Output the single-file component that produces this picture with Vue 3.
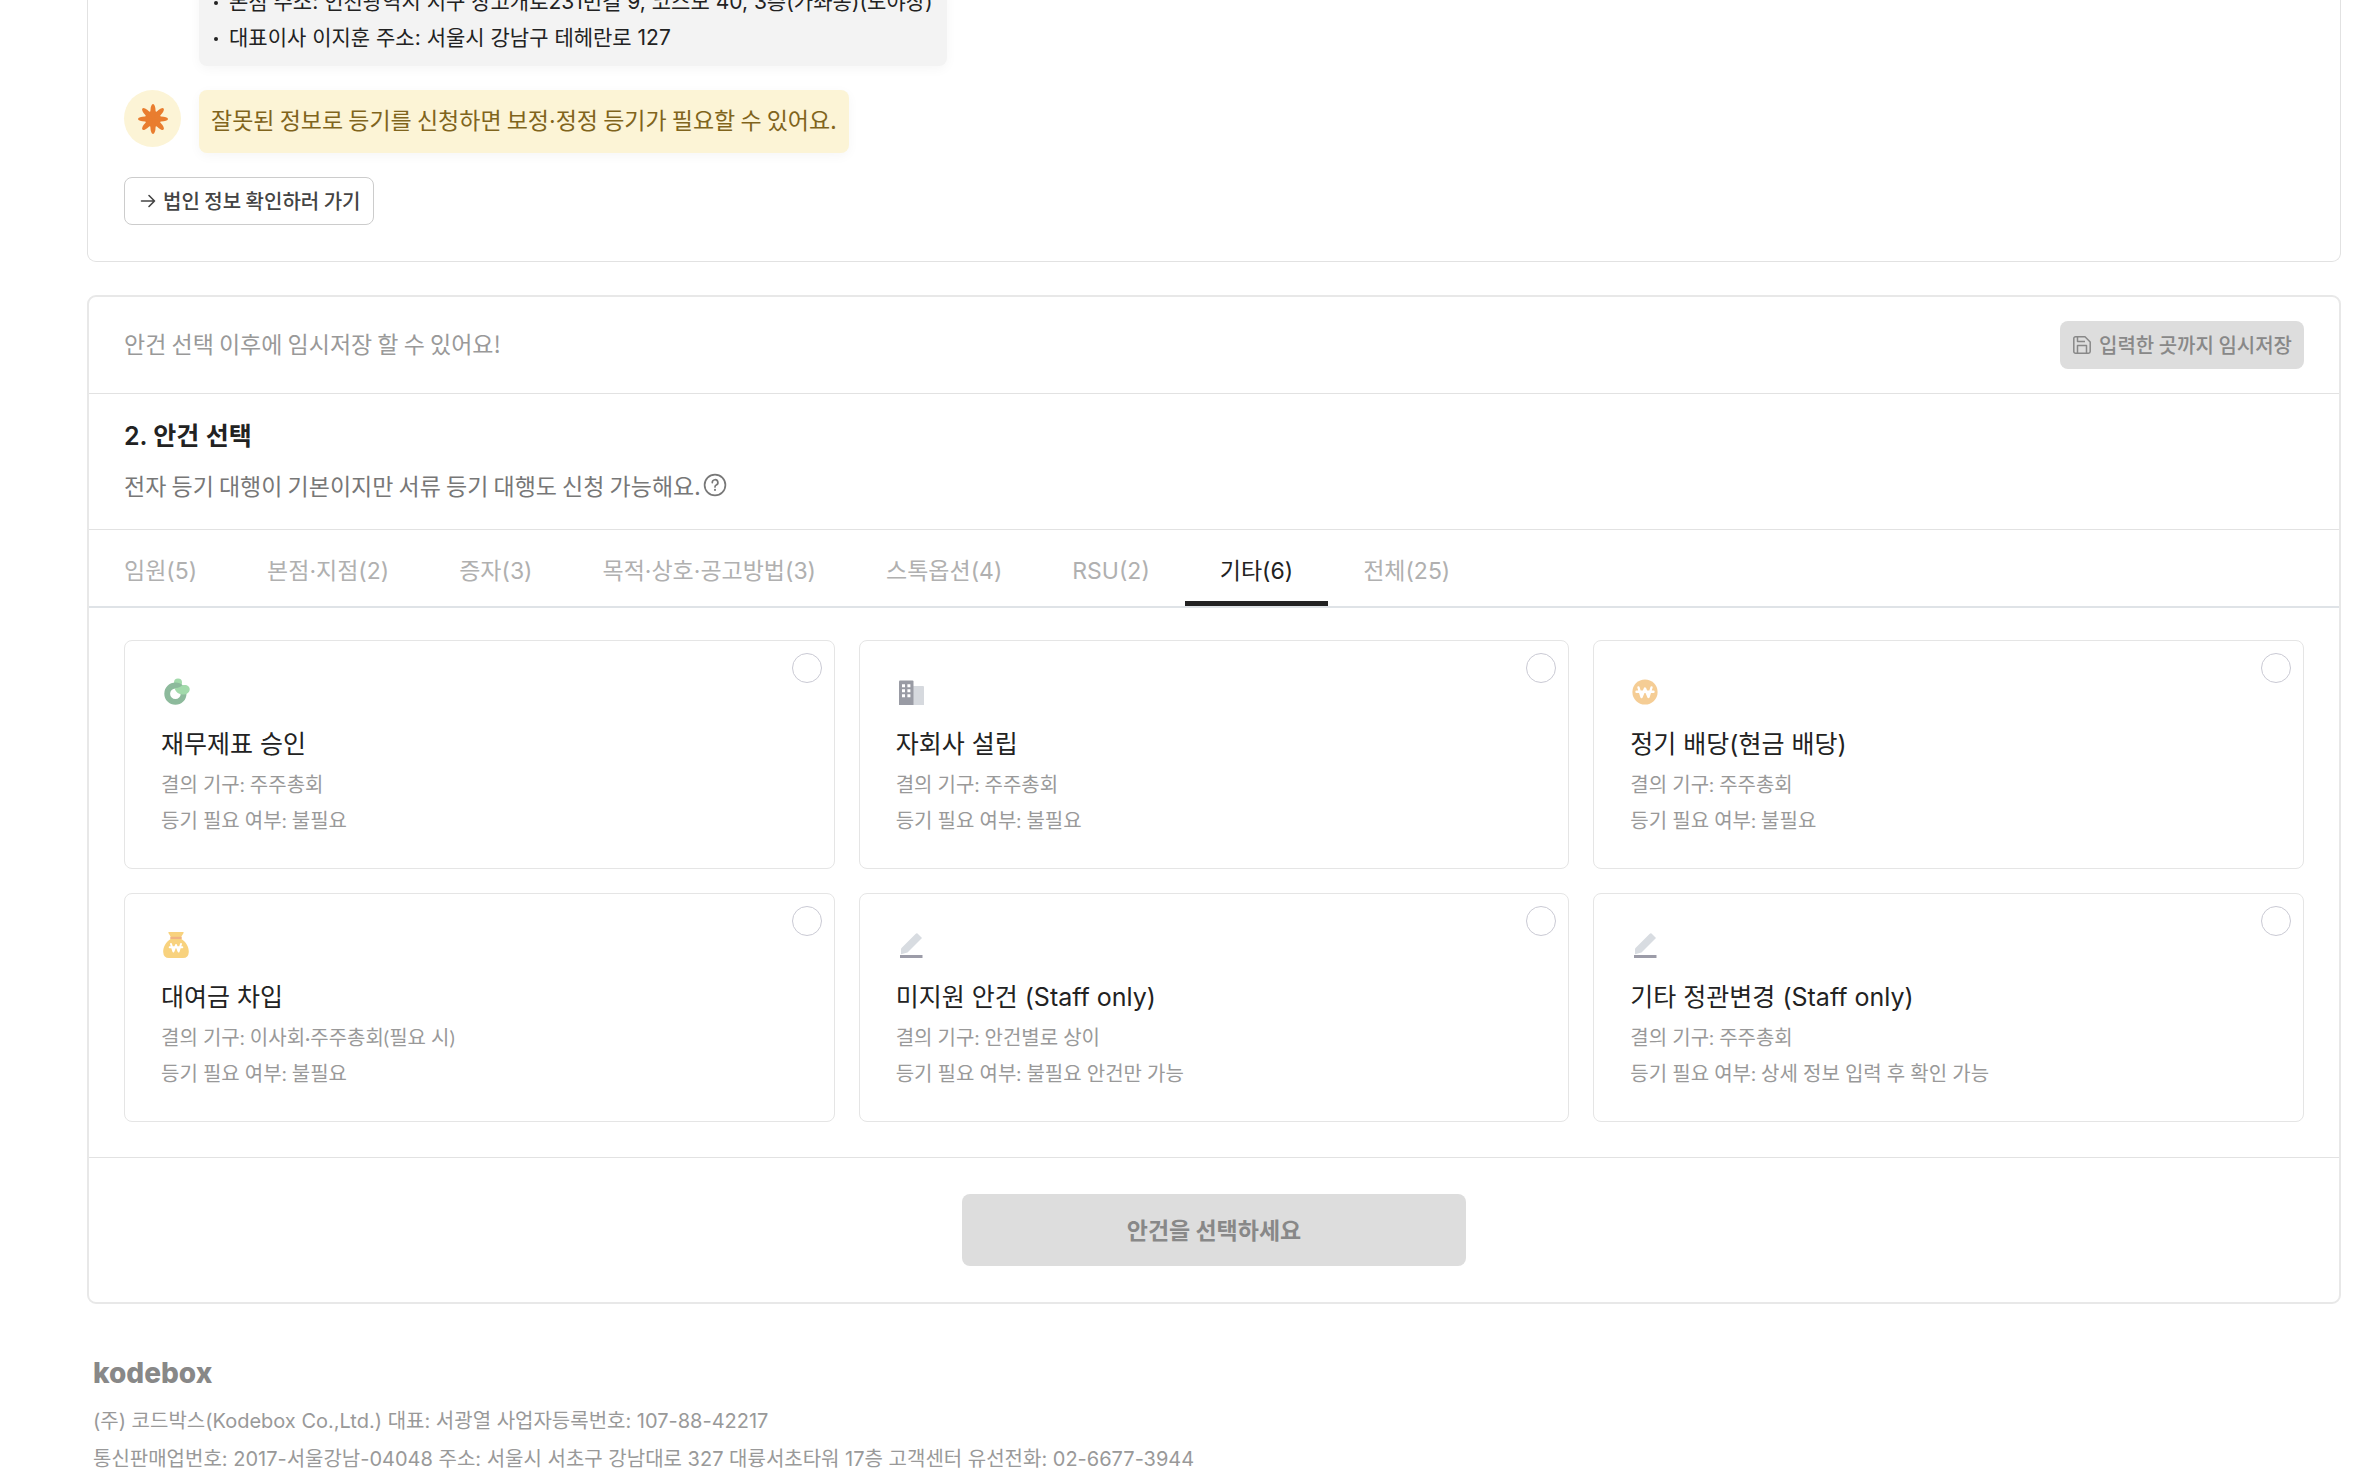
<script setup>
import { ref } from 'vue'

const addresses = [
  '본점 주소: 인천광역시 서구 장고개로231번길 9, 코스모 40, 3층(가좌동)(도야장)',
  '대표이사 이지훈 주소: 서울시 강남구 테헤란로 127',
]

const tabs = [
  '임원(5)',
  '본점·지점(2)',
  '증자(3)',
  '목적·상호·공고방법(3)',
  '스톡옵션(4)',
  'RSU(2)',
  '기타(6)',
  '전체(25)',
]
const activeTab = ref('기타(6)')

const agendas = [
  { id: 'statement', icon: 'donut', title: '재무제표 승인', organ: '주주총회', registry: '불필요' },
  { id: 'subsidiary', icon: 'building', title: '자회사 설립', organ: '주주총회', registry: '불필요' },
  { id: 'dividend', icon: 'coin', title: '정기 배당(현금 배당)', organ: '주주총회', registry: '불필요' },
  { id: 'loan', icon: 'bag', title: '대여금 차입', organ: '이사회·주주총회(필요 시)', registry: '불필요' },
  { id: 'unsupported', icon: 'pencil', title: '미지원 안건 (Staff only)', organ: '안건별로 상이', registry: '불필요 안건만 가능' },
  { id: 'articles', icon: 'pencil', title: '기타 정관변경 (Staff only)', organ: '주주총회', registry: '상세 정보 입력 후 확인 가능' },
]
const selected = ref([])
</script>

<template>
  <div class="page">
    <section class="panel notice">
      <ul class="bubble addresses">
        <li v-for="line in addresses" :key="line">{{ line }}</li>
      </ul>
      <div class="warning">
        <span class="avatar">
          <svg viewBox="0 0 57 57" width="57" height="57" aria-hidden="true">
            <g fill="#e97d2f" transform="translate(29 29)">
              <circle r="8" />
              <ellipse
                v-for="n in 8"
                :key="n"
                :transform="`rotate(${n * 45})`"
                cy="-8"
                rx="2.6"
                ry="7"
              />
            </g>
          </svg>
        </span>
        <p class="bubble caution">잘못된 정보로 등기를 신청하면 보정<span class="dot">·</span>정정 등기가 필요할 수 있어요.</p>
      </div>
      <a class="link-button" href="#company">
        <svg viewBox="0 0 16 16" width="16" height="16" fill="none" stroke="currentColor" stroke-width="1.6" stroke-linecap="round" stroke-linejoin="round" aria-hidden="true">
          <path d="M1.500 8H14.500M9 2.500 14.500 8 9 13.500" />
        </svg>
        법인 정보 확인하러 가기
      </a>
    </section>

    <section class="panel agenda">
      <header class="save-bar">
        <p>안건 선택 이후에 임시저장 할 수 있어요!</p>
        <button class="save" type="button" disabled>
          <svg viewBox="0 0 20 20" width="20" height="20" fill="none" stroke="currentColor" stroke-width="1.5" stroke-linejoin="round" aria-hidden="true">
            <path d="M3.500 1.800H13L18.200 7V16.500A1.700 1.700 0 0 1 16.500 18.200H3.500A1.700 1.700 0 0 1 1.800 16.500V3.500A1.700 1.700 0 0 1 3.500 1.800Z" />
            <path d="M5.500 2V6.500H13M5.500 18V10.500H14.500V18" />
          </svg>
          입력한 곳까지 임시저장
        </button>
      </header>

      <div class="intro">
        <h2>2. 안건 선택</h2>
        <p>
          전자 등기 대행이 기본이지만 서류 등기 대행도 신청 가능해요.
          <svg viewBox="0 0 24 24" width="24" height="24" fill="none" stroke="currentColor" stroke-width="1.7" stroke-linecap="round" aria-hidden="true">
            <circle cx="12" cy="12" r="10.400" />
            <path d="M9.300 9.600A2.800 2.800 0 1 1 12.900 12.200Q12 12.600 12 14" />
            <path d="M12 16.800V17" stroke-width="2" />
          </svg>
        </p>
      </div>

      <nav class="tabs" role="tablist">
        <button
          v-for="tab in tabs"
          :key="tab"
          type="button"
          role="tab"
          :aria-selected="tab === activeTab"
          :class="{ active: tab === activeTab }"
          @click="activeTab = tab"
        >
          {{ tab }}
        </button>
      </nav>

      <div class="cards">
        <label v-for="item in agendas" :key="item.id" class="card" :for="item.id">
          <input :id="item.id" v-model="selected" type="checkbox" :value="item.id" />
          <svg class="icon" viewBox="0 0 30 30" width="30" height="30" aria-hidden="true">
            <g v-if="item.icon === 'donut'">
              <circle cx="17" cy="5.500" r="4" fill="#a2daab" />
              <circle cx="14.400" cy="16.700" r="8.200" fill="none" stroke="#8dba9c" stroke-width="5.800" />
              <path d="M13.500 11C17 11.500 19 10 21 8.500C25 7 29 9 28.700 12.500C28.400 16 25 17.800 21.500 17.500C17 17.200 14.500 14.500 13.500 11Z" fill="#a2daab" />
            </g>
            <g v-else-if="item.icon === 'building'">
              <path d="M17 9H27Q28 9 28 10V28H17Z" fill="#d6d9de" />
              <path d="M4 3.500H16.500Q17.500 3.500 17.500 4.500V28H3V4.500Q3 3.500 4 3.500Z" fill="#999ba4" />
              <path d="M6 7.200H9V10.200H6ZM11.400 7.200H14.400V10.200H11.400ZM6 12.200H9V15.200H6ZM11.400 12.200H14.400V15.200H11.400ZM6 17.200H9V20.200H6ZM11.400 17.200H14.400V20.200H11.400Z" fill="#fff" />
            </g>
            <g v-else-if="item.icon === 'coin'">
              <circle cx="15" cy="15" r="12.600" fill="#f5cd95" />
              <path d="M8.500 10.500 11.500 20 15 11.500 18.500 20 21.500 10.500M6.500 14.700H23.500" fill="none" stroke="#fff" stroke-width="2.400" stroke-linecap="round" stroke-linejoin="round" />
            </g>
            <g v-else-if="item.icon === 'bag'">
              <path d="M8 2H22Q23 2 22.600 3L20.400 6.500V9C25 12 28 17 27.800 22Q27.500 28 22 28H8Q2.500 28 2.200 22C2 17 5 12 9.600 9V6.500L7.400 3Q7 2 8 2Z" fill="#f8d27e" />
              <path d="M9.400 6.800H20.600V9H9.400Z" fill="#f0b283" />
              <path d="M10 14 12.400 21.500 15 15 17.600 21.500 20 14M8.700 17.300H21.300" fill="none" stroke="#fff" stroke-width="2" stroke-linecap="round" stroke-linejoin="round" />
            </g>
            <g v-else>
              <path d="M21.500 3.500 26 8 11.500 22.500 5 24.200V18.500L19.500 4Q20.500 3 21.500 3.500Z" fill="#d8dce1" />
              <path d="M4 25H26.500V28H4Z" fill="#9c9ca8" />
            </g>
          </svg>
          <strong>{{ item.title }}</strong>
          <span>결의 기구: {{ item.organ }}</span>
          <span>등기 필요 여부: {{ item.registry }}</span>
        </label>
      </div>

      <footer class="submit-bar">
        <button class="submit" type="button" disabled>안건을 선택하세요</button>
      </footer>
    </section>

    <footer class="company">
      <div class="logo">kodebox</div>
      <p>(주) 코드박스(Kodebox Co.,Ltd.) 대표: 서광열 사업자등록번호: 107-88-42217</p>
      <p>통신판매업번호: 2017-서울강남-04048 주소: 서울시 서초구 강남대로 327 대륭서초타워 17층 고객센터 유선전화: 02-6677-3944</p>
    </footer>
  </div>
</template>

<style>
body {
  margin: 0;
  background: #fff;
}
</style>

<style scoped>
.page {
  box-sizing: border-box;
  height: 100vh;
  overflow: hidden;
  padding: 0 31px 0 87px;
  color: #222;
  font-family: "Noto Sans CJK KR", sans-serif;
  font-size: 23px;
  line-height: 36px;
}

p,
h2,
ul {
  margin: 0;
  padding: 0;
}

button {
  font: inherit;
}

.panel {
  box-sizing: border-box;
  border: 1px solid #e2e2e2;
  border-radius: 9px;
}

/* The top of the notice is scrolled out of view. */
.notice {
  display: flex;
  flex-direction: column;
  align-items: flex-start;
  gap: 24px;
  margin-top: -16px;
  border-top: 0;
  border-radius: 0 0 9px 9px;
  padding: 0 36px 36px;
}

.bubble {
  border-radius: 8px;
  box-shadow: 0 3px 12px rgba(0, 0, 0, 0.04);
}

.addresses,
.dot,
.intro h2,
.tabs,
.card strong,
.company {
  font-family: Inter, "Noto Sans CJK KR", sans-serif;
}

.dot {
  line-height: 1;
}

.addresses {
  margin-left: 75px;
  padding: 0 14px 10px 15px;
  background: #f3f3f3;
  font-size: 21px;
  list-style: none;
}

.addresses li::before {
  content: "";
  display: inline-block;
  width: 4px;
  height: 4px;
  margin-right: 11px;
  border-radius: 50%;
  background: #222;
  vertical-align: middle;
}

.warning {
  display: flex;
  align-items: flex-start;
  gap: 18px;
}

.avatar {
  width: 57px;
  height: 57px;
  border-radius: 50%;
  background: #fcf4d6;
}

.caution {
  padding: 11px 12px 16px;
  background: #fcf4d6;
  color: #80641c;
}

.link-button {
  box-sizing: border-box;
  display: flex;
  align-items: center;
  gap: 7px;
  height: 48px;
  padding: 0 12px 0 15px;
  border: 1px solid #ccc;
  border-radius: 8px;
  color: #444;
  font-size: 20px;
  font-weight: 500;
  text-decoration: none;
}

.agenda {
  margin-top: 33px;
  border: 2px solid #e8e8e8;
}

.save-bar {
  display: flex;
  align-items: center;
  justify-content: space-between;
  padding: 24px 35px;
  border-bottom: 1px solid #e2e2e2;
  color: #999;
}

.save-bar p {
  padding-bottom: 4px;
}

.save {
  display: flex;
  align-items: center;
  gap: 7px;
  height: 48px;
  padding: 0 12px;
  border: 0;
  border-radius: 8px;
  background: #ddd;
  color: #888;
  font-size: 20px;
  font-weight: 500;
}

.intro {
  display: flex;
  flex-direction: column;
  gap: 13px;
  padding: 24px 35px 26px;
  border-bottom: 1px solid #e2e2e2;
}

.intro h2 {
  font-size: 25px;
  font-weight: 600;
  line-height: 36px;
}

.intro p {
  display: flex;
  align-items: center;
  gap: 2px;
  color: #777;
}

.tabs {
  display: flex;
  border-bottom: 2px solid #dfe3e7;
}

.tabs button {
  height: 76px;
  padding: 10px 35px 0;
  border: 0;
  border-bottom: 5px solid transparent;
  background: none;
  color: #b0b0b0;
}

.tabs .active {
  border-color: #222;
  color: #222;
}

.cards {
  display: grid;
  grid-template-columns: repeat(3, 1fr);
  gap: 24px;
  padding: 32px 35px 35px;
}

.card {
  position: relative;
  display: flex;
  flex-direction: column;
  align-items: flex-start;
  padding: 36px 36px 30px;
  border: 1px solid #e5e5e5;
  border-radius: 8px;
  color: #999;
  font-family: Lato, "Noto Sans CJK KR", sans-serif;
  font-size: 20px;
}

.card input {
  position: absolute;
  top: 12px;
  right: 12px;
  box-sizing: border-box;
  width: 30px;
  height: 30px;
  margin: 0;
  border: 1px solid #cacad4;
  border-radius: 50%;
  background: #fff;
  appearance: none;
}

.card input:checked {
  border: 8px solid #222;
}

.card strong {
  margin: 19px 0 4px;
  color: #222;
  font-size: 25px;
  font-weight: 400;
}

.submit-bar {
  display: flex;
  justify-content: center;
  padding: 36px;
  border-top: 1px solid #e2e2e2;
}

.submit {
  width: 504px;
  height: 72px;
  padding: 0 0 2px;
  border: 0;
  border-radius: 8px;
  background: #ddd;
  color: #888;
  font-weight: 600;
}

.company {
  padding: 50px 6px 0;
  color: #999;
  font-size: 20px;
  line-height: 38px;
  white-space: nowrap;
}

.logo {
  margin-bottom: 10px;
  color: #888;
  font-size: 28px;
  font-weight: 800;
}
</style>
